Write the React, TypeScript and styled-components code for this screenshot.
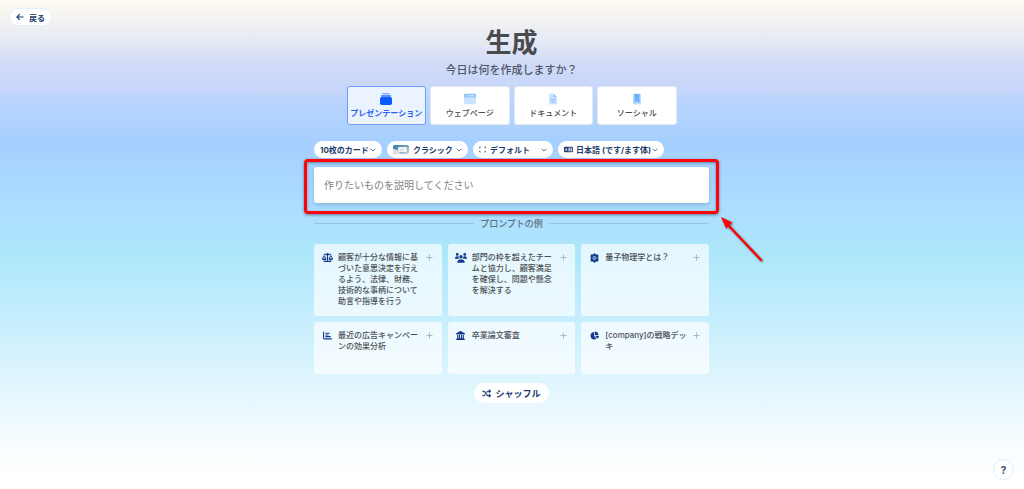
import React from "react";
import styled, { createGlobalStyle, css } from "styled-components";
import { FaScaleBalanced, FaChartBar, FaLandmark, FaChartPie, FaShuffle, FaLanguage } from "react-icons/fa6";

const GlobalStyle = createGlobalStyle`
  *, *::before, *::after { box-sizing: border-box; }
  body {
    margin: 0;
    font-family: Inter, "Noto Sans CJK JP", sans-serif;
    color: #4a4d52;
  }
  button, input, select { font-family: inherit; }
`;

const Page = styled.div`
  min-height: 100vh;
  padding: 8px 10px 8px 9px;
  background: linear-gradient(
    180deg,
    #fffaf0 0%,
    #e3e8f4 9%,
    #d2dbf8 13%,
    #c5d5fa 19%,
    #bcd5fd 20%,
    #a5cfff 29%,
    #addeff 43%,
    #ade7fa 52%,
    #c2edfe 63%,
    #dff5fd 78%,
    #f8fdff 91%,
    #ffffff 98%
  );
`;

const Header = styled.header`
  display: flex;
`;

const Pill = css`
  display: inline-flex;
  align-items: center;
  border: 0;
  border-radius: 20px;
  background: #ffffff;
  color: #1c3d6d;
  font-weight: 700;
  cursor: pointer;
`;

const BackButton = styled.button`
  ${Pill}
  gap: 5px;
  height: 18px;
  padding: 0 6px;
  border: 1px solid #e4efff;
  font-size: 8px;
`;

const Main = styled.main`
  display: flex;
  flex-direction: column;
  align-items: center;
  width: 100%;
  max-width: 395px;
  margin: 0 auto;
`;

const Title = styled.h1`
  margin: 0;
  font-size: 26px;
  line-height: 34px;
  font-weight: 700;
  color: #4a4b4e;
`;

const Subtitle = styled.p`
  margin: 2px 0 8px;
  font-size: 11px;
  line-height: 16px;
  font-weight: 500;
  color: #4f5765;
`;

const Tabs = styled.div`
  display: grid;
  grid-template-columns: repeat(4, 1fr);
  gap: 4px;
  width: 100%;
  max-width: 330px;
`;

const Tab = styled.button<{ $active?: boolean }>`
  display: flex;
  flex-direction: column;
  align-items: center;
  justify-content: center;
  gap: 2px;
  height: 39px;
  padding: 0;
  border: 1px solid ${(p) => (p.$active ? "#6f9dfa" : "#e3e9f3")};
  border-radius: 3px;
  background: ${(p) => (p.$active ? "#ebf3ff" : "#ffffff")};
  color: ${(p) => (p.$active ? "#2a62f0" : "#4a4d52")};
  font-size: 8px;
  line-height: 12px;
  font-weight: ${(p) => (p.$active ? 700 : 500)};
  white-space: nowrap;
  cursor: pointer;
`;

const Options = styled.div`
  display: flex;
  flex-wrap: wrap;
  gap: 5px;
  align-self: stretch;
  margin: 16px 0 9px;
`;

const Option = styled.label<{ $width: number }>`
  ${Pill}
  width: ${(p) => p.$width}px;
  height: 17px;
  padding: 0 6px;
  & > svg { flex: none; }
  & > svg:first-child { margin-right: 3px; }
`;

const Select = styled.select`
  flex: 1;
  min-width: 0;
  padding: 0;
  border: 0;
  appearance: none;
  background: transparent;
  color: inherit;
  font-size: 8px;
  line-height: 16px;
  font-weight: 700;
  outline: 0;
  cursor: pointer;
`;

const PromptArea = styled.div`
  position: relative;
  align-self: stretch;
`;

const PromptInput = styled.input`
  display: block;
  width: 100%;
  height: 36px;
  padding: 0 10px;
  border: 0;
  border-radius: 3px;
  background: #ffffff;
  box-shadow: 0 2px 5px rgba(40, 90, 140, 0.3);
  color: #4a4d52;
  font-size: 10px;
  outline: 0;
  &::placeholder { color: #808388; opacity: 1; }
`;

const Highlight = styled.div`
  position: absolute;
  inset: -8px -10px -11px;
  border: 3px solid #fb0508;
  border-radius: 4px;
  box-shadow: 0 1px 3px rgba(40, 50, 80, 0.6), inset 0 1px 3px rgba(40, 50, 80, 0.5);
  pointer-events: none;
`;

const Pointer = styled.svg`
  position: absolute;
  top: 48px;
  left: 100%;
  margin-left: 10px;
  overflow: visible;
  filter: drop-shadow(1px 1px 1px rgba(50, 60, 80, 0.6));
  pointer-events: none;
`;

const Divider = styled.h2`
  display: flex;
  align-items: center;
  align-self: stretch;
  gap: 6px;
  margin: 13px 0;
  font-size: 9px;
  line-height: 15px;
  font-weight: 500;
  color: #5f7180;
  &::before, &::after {
    content: "";
    flex: 1;
    height: 1px;
    background: #93c9e2;
  }
`;

const Cards = styled.div`
  display: grid;
  grid-template-columns: repeat(3, 1fr);
  gap: 6px;
  align-self: stretch;
`;

const Card = styled.button`
  display: grid;
  grid-template-columns: 12px 1fr 8px;
  gap: 5px;
  align-items: start;
  min-height: 52px;
  padding: 8px 8px 9px 7px;
  border: 0;
  border-radius: 3px;
  background: rgba(255, 255, 255, 0.68);
  color: #4c5055;
  font-size: 8px;
  line-height: 11px;
  font-weight: 500;
  text-align: left;
  cursor: pointer;
`;

const CardIcon = styled.span`
  display: flex;
  height: 11px;
  align-items: center;
  justify-content: center;
  color: #123a8c;
`;

const CardPlus = styled(CardIcon)`
  color: #a8bac4;
`;

const ShuffleButton = styled.button`
  ${Pill}
  justify-content: center;
  gap: 4px;
  height: 20px;
  margin-top: 9px;
  padding: 0 8px;
  font-size: 9px;
`;

const HelpButton = styled.button`
  position: fixed;
  right: 10px;
  bottom: 9px;
  width: 21px;
  height: 21px;
  padding: 0;
  border: 1px solid #dcebff;
  border-radius: 50%;
  background: #ffffff;
  color: #38506f;
  font-size: 10px;
  font-weight: 700;
  cursor: pointer;
`;

const Chevron = () => (
  <svg width="6" height="4" viewBox="0 0 6 4" fill="none" stroke="#5a7390" aria-hidden="true">
    <path d="M.7.8 3 3.1 5.3.8" />
  </svg>
);

const BackArrow = () => (
  <svg width="8" height="8" viewBox="0 0 8 8" fill="none" stroke="#173a6b" strokeWidth="1.1" aria-hidden="true">
    <path d="M7.5 4H1M3.7 1.2.9 4l2.8 2.8" />
  </svg>
);

const DeckIcon = () => (
  <svg width="12" height="12" viewBox="0 0 12 12" aria-hidden="true">
    <rect x="2" y="0" width="8" height="1.4" rx=".7" fill="#8db5ff" />
    <rect x="1" y="2" width="10" height="2" rx=".8" fill="#5a92ff" />
    <rect x="0" y="4" width="12" height="8" rx="1.8" fill="#0b5bfb" />
  </svg>
);

const WebIcon = () => (
  <svg width="12" height="12" viewBox="0 0 12 12" aria-hidden="true">
    <path d="M0 4.5h12V10a1.2 1.2 0 0 1-1.2 1.2H1.2A1.2 1.2 0 0 1 0 10Z" fill="#cbe3ff" />
    <path d="M1.2.8h9.6A1.2 1.2 0 0 1 12 2v2.6H0V2A1.2 1.2 0 0 1 1.2.8Z" fill="#86c1fc" />
    <path d="M1.6 2.8h1M3.9 2.8h6.4" stroke="#e2f1ff" strokeWidth="1" />
  </svg>
);

const DocIcon = () => (
  <svg width="12" height="12" viewBox="0 0 12 12" aria-hidden="true">
    <path d="M3 .5h3.6v3.4H10v6.6a1 1 0 0 1-1 1H3a1 1 0 0 1-1-1v-9a1 1 0 0 1 1-1Z" fill="#c9e3ff" />
    <path d="M6.6.5 10 3.9H6.6Z" fill="#82bffc" />
    <path d="M4 6.6h4M4 8.8h4" stroke="#7dbcf9" />
  </svg>
);

const SocialIcon = () => (
  <svg width="12" height="12" viewBox="0 0 12 12" aria-hidden="true">
    <rect x="2" y=".5" width="8" height="11" rx="1" fill="#bfdfff" />
    <path d="M3.5 1h5v9.2L6 8.2l-2.5 2Z" fill="#68b2fa" />
  </svg>
);

const ThemeThumb = () => (
  <svg width="17" height="9" viewBox="0 0 17 9" aria-hidden="true">
    <defs>
      <linearGradient id="sky" x1="0" y1="0" x2="1" y2="1">
        <stop offset="0" stopColor="#2678a8" />
        <stop offset=".55" stopColor="#7aa6c8" />
        <stop offset="1" stopColor="#dcd3da" />
      </linearGradient>
    </defs>
    <rect width="16" height="9" rx="2" fill="url(#sky)" />
    <path d="M0 4 4 5l4 4H2a2 2 0 0 1-2-2Z" fill="#e8dde2" />
    <rect x="5" y="2" width="9" height="5" rx="1.4" fill="#f4f2f4" />
    <path d="M7 4h4.500M7 5.500h3" stroke="#cfd0d8" strokeWidth=".6" />
  </svg>
);

const FrameIcon = () => (
  <svg width="8" height="7" viewBox="0 0 8 7" fill="none" stroke="#48617f" strokeWidth=".9" aria-hidden="true">
    <path d="M.6 2.2V1h1.2M5.2 1h1.2v1.2M6.4 4.8V6H5.2M1.8 6H.6V4.8" />
  </svg>
);

const TeamIcon = () => (
  <svg width="12" height="10" viewBox="0 0 24 20" fill="currentColor" aria-hidden="true">
    <circle cx="4.5" cy="2.8" r="2.8" />
    <circle cx="19.5" cy="2.8" r="2.8" />
    <circle cx="12" cy="7.5" r="3.4" />
    <path d="M0 11.500C0 8 2 6.500 4.500 6.500c1.200 0 2.100.3 2.800.9 0 1.600.4 3 1.200 4.100ZM24 11.500c0-3.500-2-5-4.500-5-1.200 0-2.100.3-2.800.9 0 1.600-.4 3-1.200 4.100ZM4.500 19.500c0-4.500 2.800-7 7.500-7s7.500 2.500 7.500 7Z" />
  </svg>
);

const AtomIcon = () => (
  <svg width="9" height="10" viewBox="0 0 18 20" aria-hidden="true">
    <path d="M9 0 12 3h4.500L17 8l-1 2 1 2-.5 5H12l-3 3-3-3H1.500L1 12l1-2-1-2 .5-5H6Z" fill="currentColor" />
    <circle cx="9" cy="10" r="3.2" fill="none" stroke="#dff4fd" strokeWidth="1.4" />
    <circle cx="9" cy="10" r="1" fill="#dff4fd" />
  </svg>
);

const PlusIcon = () => (
  <svg width="7" height="7" viewBox="0 0 7 7" stroke="currentColor" aria-hidden="true">
    <path d="M3.5 .5v6M.5 3.5h6" />
  </svg>
);

const tabs = [
  { label: "プレゼンテーション", icon: <DeckIcon /> },
  { label: "ウェブページ", icon: <WebIcon /> },
  { label: "ドキュメント", icon: <DocIcon /> },
  { label: "ソーシャル", icon: <SocialIcon /> },
];

const options = [
  { name: "カードの枚数", value: "10枚のカード", width: 68, icon: null },
  { name: "テーマ", value: "クラシック", width: 81, icon: <ThemeThumb /> },
  { name: "ページサイズ", value: "デフォルト", width: 80, icon: <FrameIcon /> },
  { name: "言語", value: "日本語 (です/ます体)", width: 106, icon: <FaLanguage size={9} /> },
];

const prompts = [
  { text: "顧客が十分な情報に基づいた意思決定を行えるよう、法律、財務、技術的な事柄について助言や指導を行う", icon: <FaScaleBalanced size={11} /> },
  { text: "部門の枠を超えたチームと協力し、顧客満足を確保し、問題や懸念を解決する", icon: <TeamIcon /> },
  { text: "量子物理学とは？", icon: <AtomIcon /> },
  { text: "最近の広告キャンペーンの効果分析", icon: <FaChartBar size={9} /> },
  { text: "卒業論文審査", icon: <FaLandmark size={9} /> },
  { text: "[company]の戦略デッキ", icon: <FaChartPie size={9} /> },
];

export default function App() {
  return (
    <Page lang="ja">
      <GlobalStyle />
      <Header>
        <BackButton type="button"><BackArrow />戻る</BackButton>
      </Header>
      <Main>
        <Title>生成</Title>
        <Subtitle>今日は何を作成しますか？</Subtitle>
        <Tabs>
          {tabs.map((tab, i) => (
            <Tab key={tab.label} type="button" $active={i === 0} aria-pressed={i === 0}>
              {tab.icon}
              {tab.label}
            </Tab>
          ))}
        </Tabs>
        <Options>
          {options.map((option) => (
            <Option key={option.name} $width={option.width}>
              {option.icon}
              <Select aria-label={option.name} defaultValue={option.value}>
                <option>{option.value}</option>
              </Select>
              <Chevron />
            </Option>
          ))}
        </Options>
        <PromptArea>
          <PromptInput type="text" aria-label="プロンプト" placeholder="作りたいものを説明してください" />
          <Highlight />
          <Pointer width="46" height="48" viewBox="0 0 46 48" aria-hidden="true">
            <path d="M9 10 42 45" stroke="#fb0508" strokeWidth="2.5" strokeLinecap="round" />
            <path d="M2 2 13.500 7.500 7 13.500Z" fill="#fb0508" />
          </Pointer>
        </PromptArea>
        <Divider>プロンプトの例</Divider>
        <Cards>
          {prompts.map((prompt) => (
            <Card key={prompt.text} type="button">
              <CardIcon>{prompt.icon}</CardIcon>
              <span>{prompt.text}</span>
              <CardPlus><PlusIcon /></CardPlus>
            </Card>
          ))}
        </Cards>
        <ShuffleButton type="button"><FaShuffle size={9} />シャッフル</ShuffleButton>
      </Main>
      <HelpButton type="button" aria-label="ヘルプ">?</HelpButton>
    </Page>
  );
}
